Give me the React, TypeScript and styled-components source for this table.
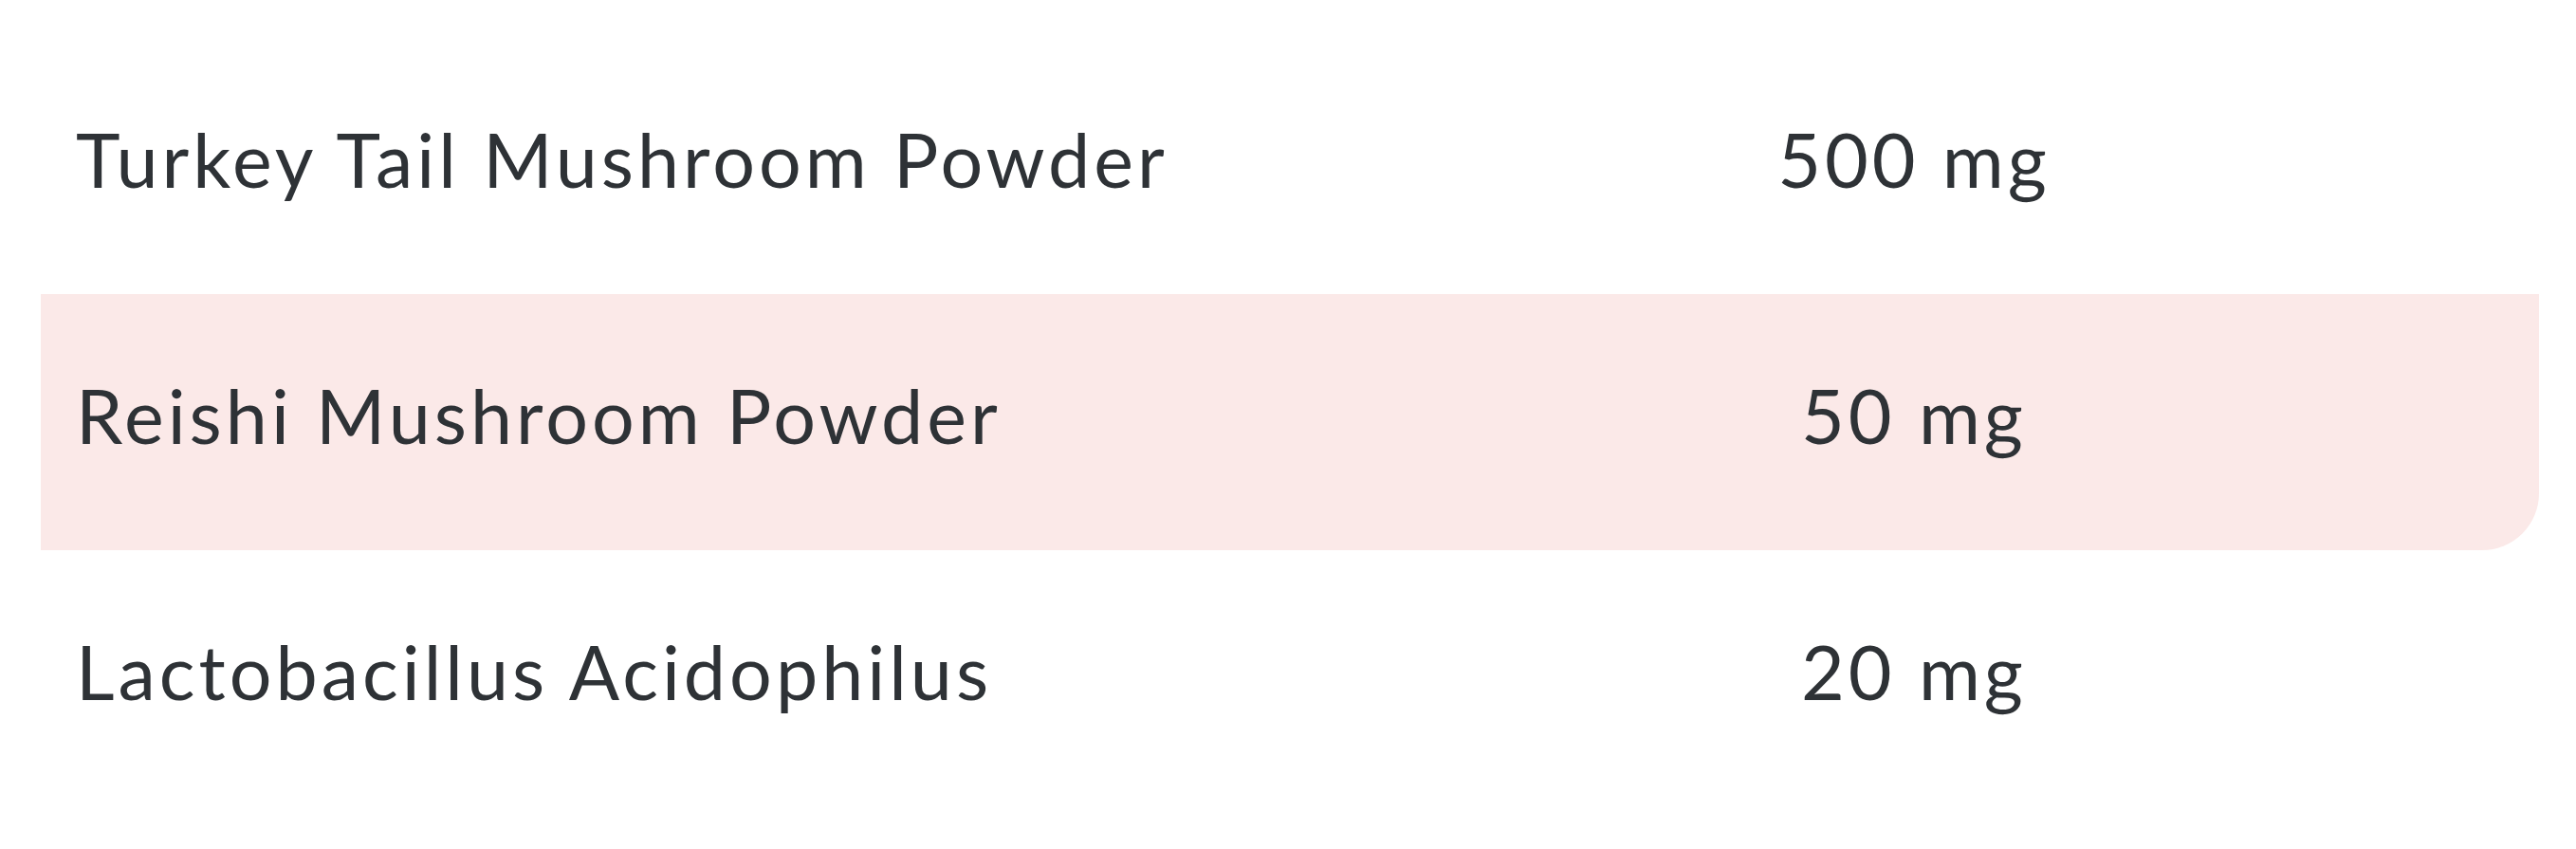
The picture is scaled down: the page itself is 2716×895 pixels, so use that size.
import styled, { createGlobalStyle } from "styled-components";

const GlobalStyle = createGlobalStyle`
  html, body { margin: 0; padding: 0; background: #ffffff; }
  body { font-family: Lato, "Open Sans", sans-serif; }
`;

const ingredients = [
  { name: "Turkey Tail Mushroom Powder", amount: "500 mg" },
  { name: "Reishi Mushroom Powder", amount: "50 mg" },
  { name: "Lactobacillus Acidophilus", amount: "20 mg" },
];

const App: React.FC = () => {
  return (
    <>
      <GlobalStyle />
      <StyledTable>
        {ingredients.map((item, i) => (
          <StyledRow key={item.name} $shaded={i % 2 === 1}>
            <StyledName>{item.name}</StyledName>
            <StyledAmount>{item.amount}</StyledAmount>
          </StyledRow>
        ))}
      </StyledTable>
    </>
  );
};

const StyledTable = styled.div`
  display: flex; flex-direction: column;
  width: 2634px; padding: 40px 0 45px 43px;
`;

const StyledRow = styled.div<{ $shaded: boolean }>`
  display: grid; grid-template-columns: 1600px 676px 1fr; align-items: center;
  height: 270px; padding: 0 0 16px 37px; box-sizing: border-box;
  background: ${p => (p.$shaded ? "#fbe9e8" : "transparent")};
  border-bottom-right-radius: ${p => (p.$shaded ? "60px" : "0")};
`;

const StyledName = styled.div`
  font-size: 79px; font-weight: 400; letter-spacing: 4px; color: #2e3236; line-height: 1;
`;

const StyledAmount = styled.div`
  font-size: 79px; font-weight: 400; letter-spacing: 4px; color: #2e3236; line-height: 1; text-align: center;
`;

export default App;
